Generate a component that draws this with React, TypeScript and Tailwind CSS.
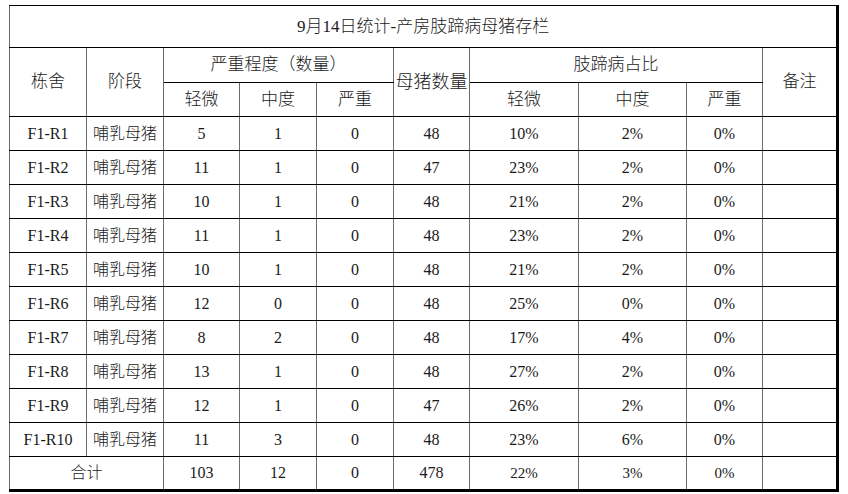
const rows = [
  ["F1-R1", "哺乳母猪", 5, 1, 0, 48, "10%", "2%", "0%"],
  ["F1-R2", "哺乳母猪", 11, 1, 0, 47, "23%", "2%", "0%"],
  ["F1-R3", "哺乳母猪", 10, 1, 0, 48, "21%", "2%", "0%"],
  ["F1-R4", "哺乳母猪", 11, 1, 0, 48, "23%", "2%", "0%"],
  ["F1-R5", "哺乳母猪", 10, 1, 0, 48, "21%", "2%", "0%"],
  ["F1-R6", "哺乳母猪", 12, 0, 0, 48, "25%", "0%", "0%"],
  ["F1-R7", "哺乳母猪", 8, 2, 0, 48, "17%", "4%", "0%"],
  ["F1-R8", "哺乳母猪", 13, 1, 0, 48, "27%", "2%", "0%"],
  ["F1-R9", "哺乳母猪", 12, 1, 0, 47, "26%", "2%", "0%"],
  ["F1-R10", "哺乳母猪", 11, 3, 0, 48, "23%", "6%", "0%"],
];

const widths = [77, 77, 76, 77, 77, 76, 109, 108, 76, 75];

// cell borders: horizontal lines black, vertical lines grey like the sheet grid
const cell = "border-y border-x border-y-black border-x-[#6b6b6b] text-center align-middle p-0 whitespace-nowrap";

export default function App() {
  return (
    <div className="w-[848px] h-[494px] bg-white pt-[5px] pl-[9px] text-[#1a1a1a] font-light font-['Liberation_Serif','Noto_Sans_CJK_SC',serif]">
      <table className="table-fixed border-collapse w-[829px] border-l border-t border-r-[3px] border-b-[3px] border-black">
        <colgroup>
          {widths.map((w, i) => (
            <col key={i} style={{ width: w }} />
          ))}
        </colgroup>
        <tbody>
          <tr className="h-[42px]">
            <td colSpan={10} className={`${cell} text-[17px]`}>
              9月14日统计-产房肢蹄病母猪存栏
            </td>
          </tr>
          <tr className="h-[35px] text-[17px]">
            <td rowSpan={2} className={cell}>栋舍</td>
            <td rowSpan={2} className={cell}>阶段</td>
            <td colSpan={3} className={cell}>严重程度（数量）</td>
            <td rowSpan={2} className={`${cell} text-[18px] overflow-visible`}>母猪数量</td>
            <td colSpan={3} className={cell}>肢蹄病占比</td>
            <td rowSpan={2} className={cell}>备注</td>
          </tr>
          <tr className="h-[34px] text-[17px]">
            <td className={cell}>轻微</td>
            <td className={cell}>中度</td>
            <td className={cell}>严重</td>
            <td className={cell}>轻微</td>
            <td className={cell}>中度</td>
            <td className={cell}>严重</td>
          </tr>
          {rows.map((r) => (
            <tr key={r[0] as string} className="h-[34px] text-[16px]">
              {r.map((v, i) => (
                <td key={i} className={cell}>
                  {v}
                </td>
              ))}
              <td className={cell}></td>
            </tr>
          ))}
          <tr className="h-[34px] text-[16px]">
            <td colSpan={2} className={cell}>合计</td>
            <td className={cell}>103</td>
            <td className={cell}>12</td>
            <td className={cell}>0</td>
            <td className={cell}>478</td>
            <td className={`${cell} text-[15px]`}>22%</td>
            <td className={`${cell} text-[15px]`}>3%</td>
            <td className={`${cell} text-[15px]`}>0%</td>
            <td className={cell}></td>
          </tr>
        </tbody>
      </table>
    </div>
  );
}
